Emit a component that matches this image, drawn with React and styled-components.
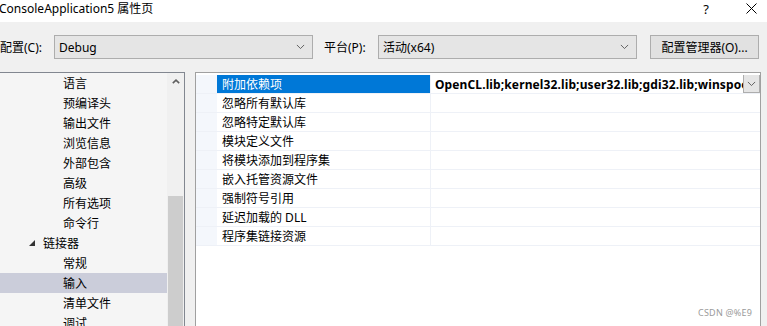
import React from 'react';
import styled, { createGlobalStyle } from 'styled-components';

const Global = createGlobalStyle`
  html, body { margin: 0; padding: 0; overflow: hidden; background: #f0f0f0; }
  body { font-family: "Noto Sans", "Noto Sans CJK SC", sans-serif; font-size: 12px; color: #000; }
`;

const Window = styled.div`
  position: relative;
  width: 767px;
  height: 326px;
  display: flex;
  flex-direction: column;
  background: #f0f0f0;
  overflow: hidden;
`;

const TitleBar = styled.div`
  height: 22px;
  flex: none;
  background: #fff;
  display: flex;
  align-items: center;
  justify-content: space-between;
  padding: 0 10px 0 0;
  margin-left: -1px;
`;

const Title = styled.span`
  font-size: 12px;
  line-height: 14px;
  margin-top: -5px;
`;

const TitleButtons = styled.div`
  display: flex;
  align-items: center;
  gap: 37px;
  margin-top: -5px;
  font-size: 13px;
`;

const Toolbar = styled.div`
  height: 50px;
  flex: none;
  display: flex;
  align-items: center;
`;

const Label = styled.span`
  width: ${p => p.$w}px;
  flex: none;
  white-space: nowrap;
`;

const Combo = styled.div`
  width: ${p => p.$w}px;
  height: 24px;
  box-sizing: border-box;
  flex: none;
  border: 1px solid #adadad;
  background: #e5e5e5;
  display: flex;
  align-items: center;
  justify-content: space-between;
  padding: 0 7px 0 4px;
  margin-right: ${p => p.$mr || 0}px;
  font-size: 12px;
`;

const Button = styled.div`
  width: 109px;
  height: 24px;
  box-sizing: border-box;
  flex: none;
  border: 1px solid #adadad;
  background: #e1e1e1;
  display: flex;
  align-items: center;
  justify-content: center;
  margin-left: 13px;
`;

const Body = styled.div`
  flex: 1;
  display: flex;
  gap: 10px;
  min-height: 0;
`;

const TreePanel = styled.div`
  width: 186px;
  flex: none;
  margin-left: -1px;
  box-sizing: border-box;
  border: 1px solid #828790;
  border-bottom: none;
  background: #f5f5f5;
  display: flex;
  overflow: hidden;
`;

const TreeList = styled.div`
  flex: 1;
  display: flex;
  flex-direction: column;
`;

const TreeItem = styled.div`
  height: 20px;
  flex: none;
  display: flex;
  align-items: center;
  padding-left: ${p => p.$indent}px;
  background: ${p => (p.$selected ? '#cbcdda' : 'transparent')};
  font-size: 12px;
  white-space: nowrap;
`;

const Expander = styled.svg`
  width: 6px;
  height: 6px;
  margin-right: 8px;
`;

const ScrollBar = styled.div`
  width: 17px;
  flex: none;
  background: #f0f0f0;
  display: flex;
  flex-direction: column;
  align-items: center;
`;

const ScrollArrow = styled.div`
  height: 17px;
  width: 17px;
  display: flex;
  align-items: center;
  justify-content: center;
`;

const ScrollThumb = styled.div`
  width: 15px;
  flex: 1;
  margin-top: 106px;
  background: #cdcdcd;
`;

const GridPanel = styled.div`
  width: 566px;
  flex: none;
  box-sizing: border-box;
  border: 1px solid #a0a0a0;
  border-bottom: none;
  background: #fff;
  padding-top: 2px;
  display: flex;
  flex-direction: column;
`;

const Row = styled.div`
  height: 19px;
  box-sizing: border-box;
  display: grid;
  grid-template-columns: 21px 214px 1fr;
  border-bottom: 1px solid #eef1f7;
`;

const Gutter = styled.div`
  background: #f4f7fc;
`;

const NameCell = styled.div`
  display: flex;
  align-items: center;
  padding-left: 5px;
  border-right: 1px solid #eef1f7;
  background: ${p => (p.$selected ? '#0078d7' : '#fff')};
  color: ${p => (p.$selected ? '#fff' : '#000')};
  white-space: nowrap;
`;

const ValueCell = styled.div`
  display: flex;
  align-items: center;
  padding-left: 4px;
  overflow: hidden;
  min-width: 0;
`;

const ValueText = styled.span`
  flex: 1;
  min-width: 0;
  overflow: hidden;
  white-space: nowrap;
  font-weight: bold;
  font-size: 12px;
  letter-spacing: 0.12px;
`;

const DropButton = styled.div`
  width: 17px;
  height: 19px;
  box-sizing: border-box;
  flex: none;
  border: 1px solid #adadad;
  background: #e5e5e5;
  display: flex;
  align-items: center;
  justify-content: center;
  margin-top: -1px;
`;

const Watermark = styled.div`
  position: absolute;
  right: 15px;
  bottom: 7px;
  font-size: 9px;
  color: #9a9a9a;
  letter-spacing: 0.2px;
`;

const Chevron = ({ size = 9 }) => (
  <svg width={size} height={size / 2 + 1} viewBox="0 0 10 6">
    <polyline points="1,1 5,5 9,1" fill="none" stroke="#555" strokeWidth="1" />
  </svg>
);

const treeItems = [
  { t: '语言', i: 63 },
  { t: '预编译头', i: 63 },
  { t: '输出文件', i: 63 },
  { t: '浏览信息', i: 63 },
  { t: '外部包含', i: 63 },
  { t: '高级', i: 63 },
  { t: '所有选项', i: 63 },
  { t: '命令行', i: 63 },
  { t: '链接器', i: 29, group: true },
  { t: '常规', i: 63 },
  { t: '输入', i: 63, sel: true },
  { t: '清单文件', i: 63 },
  { t: '调试', i: 63 },
];

const props = [
  '附加依赖项',
  '忽略所有默认库',
  '忽略特定默认库',
  '模块定义文件',
  '将模块添加到程序集',
  '嵌入托管资源文件',
  '强制符号引用',
  '延迟加载的 DLL',
  '程序集链接资源',
];

export default function App() {
  return (
    <Window>
      <Global />
      <TitleBar>
        <Title>ConsoleApplication5 属性页</Title>
        <TitleButtons>
          <span>?</span>
          <svg width="11" height="11" viewBox="0 0 11 11">
            <path d="M0.5 0.5 L10.5 10.5 M10.5 0.5 L0.5 10.5" stroke="#000" strokeWidth="1" />
          </svg>
        </TitleButtons>
      </TitleBar>
      <Toolbar>
        <Label $w={54}>配置(C):</Label>
        <Combo $w={259} $mr={11}>
          <span>Debug</span>
          <Chevron />
        </Combo>
        <Label $w={54}>平台(P):</Label>
        <Combo $w={259}>
          <span>活动(x64)</span>
          <Chevron />
        </Combo>
        <Button>配置管理器(O)...</Button>
      </Toolbar>
      <Body>
        <TreePanel>
          <TreeList>
            {treeItems.map(it => (
              <TreeItem key={it.t} $indent={it.i} $selected={it.sel}>
                {it.group && (
                  <Expander viewBox="0 0 6 6">
                    <polygon points="6,0 6,6 0,6" fill="#333" />
                  </Expander>
                )}
                {it.t}
              </TreeItem>
            ))}
          </TreeList>
          <ScrollBar>
            <ScrollArrow>
              <svg width="8" height="5" viewBox="0 0 8 5">
                <polyline points="0.8,4.2 4,1.2 7.2,4.2" fill="none" stroke="#606060" strokeWidth="1.6" />
              </svg>
            </ScrollArrow>
            <ScrollThumb />
          </ScrollBar>
        </TreePanel>
        <GridPanel>
          {props.map((p, idx) => (
            <Row key={p}>
              <Gutter />
              <NameCell $selected={idx === 0}>{p}</NameCell>
              <ValueCell>
                {idx === 0 && (
                  <>
                    <ValueText>OpenCL.lib;kernel32.lib;user32.lib;gdi32.lib;winspool.lib;comdlg32.lib</ValueText>
                    <DropButton>
                      <Chevron size={9} />
                    </DropButton>
                  </>
                )}
              </ValueCell>
            </Row>
          ))}
        </GridPanel>
      </Body>
      <Watermark>CSDN @%E9</Watermark>
    </Window>
  );
}
